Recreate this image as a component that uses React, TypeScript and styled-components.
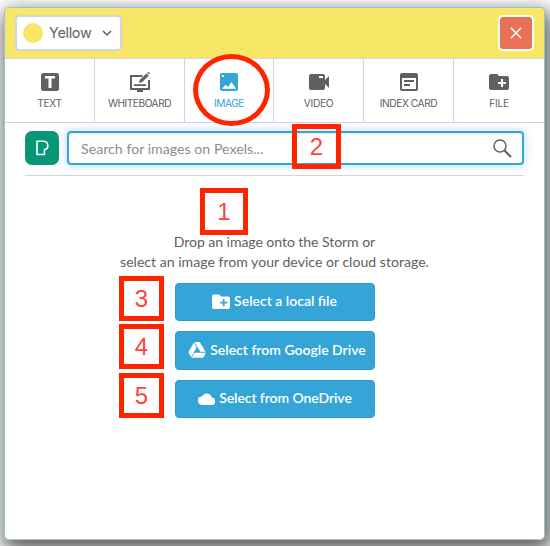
import React from 'react';
import styled, { createGlobalStyle } from 'styled-components';

const Global = createGlobalStyle`
  *, *::before, *::after { box-sizing: border-box; }
  body { margin: 0; background: #fff; overflow: hidden; font-family: Lato, "Open Sans", sans-serif; color: #5f6062; }
  svg { display: block; flex: none; }
`;

const Page = styled.main`
  width: 550px;
  height: 546px;
  padding: 7px 5px 6px 4px;
  overflow: hidden;
`;

const Dialog = styled.section`
  position: relative;
  height: 533px;
  background: #fff;
  border: 1px solid #8ec5d8;
  border-bottom-color: #b5c4ca;
  border-radius: 5px;
  box-shadow: 3px 8px 20px 4px rgba(0, 0, 0, 0.62);
`;

const Header = styled.header`
  display: flex;
  justify-content: space-between;
  align-items: flex-start;
  height: 51px;
  padding: 7px 10px;
  background: #f8e767;
  border-bottom: 1px solid #d3d8df;
  border-radius: 4px 4px 0 0;
`;

const ColorSelect = styled.button`
  display: flex;
  align-items: center;
  width: 107px;
  height: 36px;
  padding: 0 8px 0 6px;
  background: #fff;
  border: 2px solid #cfd6e2;
  border-radius: 4px;
  font: 14.5px Inter, sans-serif;
  color: #5f6062;
`;

const Swatch = styled.span`
  width: 20px;
  height: 20px;
  margin-right: 6px;
  border-radius: 50%;
  background: #f8e767;
`;

const Fitted = styled.span<{ $tracking?: number }>`
  letter-spacing: ${(p) => p.$tracking ?? 0}px;
  white-space: nowrap;
`;

const ColorName = styled(Fitted)`
  flex: 1;
  padding-bottom: 2px;
  text-align: left;
`;

const CloseButton = styled.button`
  display: grid;
  place-items: center;
  width: 36px;
  height: 36px;
  padding: 0;
  background: #e97158;
  border: 2px solid #fff;
  border-radius: 5px;
`;

const Tabs = styled.nav`
  display: grid;
  grid-template-columns: 90px 90px 89px 90px 90px 90px;
  height: 64px;
  border-bottom: 1px solid #d0d5dc;
`;

const Tab = styled.button<{ $active?: boolean }>`
  display: flex;
  flex-direction: column;
  align-items: center;
  justify-content: flex-start;
  padding: 11px 0 0;
  background: none;
  border: 0;
  border-right: 1px solid #cfd6e0;
  color: ${(p) => (p.$active ? '#35a5d7' : '#5f6062')};
  font: 10.2px/14px Inter, sans-serif;
  &:last-child { border-right: 0; }
  svg { margin-bottom: 2px; }
`;

const SearchRow = styled.div`
  display: flex;
  gap: 8px;
  height: 53px;
  margin: 0 20px;
  padding-top: 8px;
  border-bottom: 1px solid #d0d5dc;
`;

const Pexels = styled.div`
  display: grid;
  place-items: center;
  width: 34px;
  height: 34px;
  border-radius: 7px;
  background: #079777;
`;

const SearchBox = styled.div`
  display: flex;
  align-items: center;
  justify-content: space-between;
  width: 457px;
  height: 34px;
  padding: 0 10px 0 12px;
  border: 2px solid #35a5d7;
  border-radius: 4px;
  box-shadow: 0 0 10px rgba(53, 155, 225, 0.38), inset 0 1px 1px #e8e8e8;
  color: #8d8d8e;
  font-size: 14.2px;
`;

const Drop = styled.div`
  display: flex;
  flex-direction: column;
  align-items: center;
  padding-top: 56px;
`;

const Hint = styled.p`
  display: flex;
  flex-direction: column;
  align-items: center;
  margin: 0 0 11px;
  font-size: 14.1px;
  line-height: 20px;
`;

const Sources = styled.div`
  display: grid;
  grid-template-rows: 38px 39px 38px;
  gap: 10px;
  width: 200px;
`;

const SourceButton = styled.button<{ $indent?: number }>`
  display: flex;
  align-items: center;
  justify-content: center;
  gap: 4px;
  padding: 0 0 1px ${(p) => p.$indent ?? 0}px;
  border: 1px solid #2a98ca;
  border-radius: 4px;
  background: #35a5d7;
  color: #fff;
  font: 600 14px Lato, sans-serif;
  span { padding-bottom: 2px; }
`;

const Marker = styled.span<{ $x: number; $y: number; $w: number; $h: number }>`
  position: absolute;
  left: ${(p) => p.$x}px;
  top: ${(p) => p.$y}px;
  width: ${(p) => p.$w}px;
  height: ${(p) => p.$h}px;
  display: grid;
  place-items: center;
  border: 5px solid #ff2400;
  color: #ff4339;
  font: 24px "Liberation Sans", sans-serif;
`;

const Ring = styled.span`
  position: absolute;
  left: 188px;
  top: 46px;
  width: 77px;
  height: 72px;
  border: 5px solid #ff2400;
  border-radius: 50%;
`;

const TextIcon = () => (
  <svg width="18" height="24" viewBox="0 0 18 24">
    <rect y="3" width="18" height="18" rx="2.5" fill="currentColor" />
    <path d="M4 6h10v2.6h-3.5V18h-3V8.600H4z" fill="#fff" />
  </svg>
);
const BoardIcon = () => (
  <svg width="20" height="24" viewBox="0 0 20 24">
    <path d="M12.500 6H1v13h18V10" fill="none" stroke="currentColor" strokeWidth="2" />
    <path d="M7 19.5h6V22H7zM4 14.200h12V16H4zM9 13l.9-3.2 6.700-6.200 2.100 2.100-6.400 6.300zM17.200 3l1-.9c.4-.4 1.900 1.100 1.500 1.600l-.8.9z" fill="currentColor" />
  </svg>
);
const ImageIcon = () => (
  <svg width="18" height="24" viewBox="0 0 18 24">
    <rect y="3" width="18" height="18" rx="2" fill="currentColor" />
    <path d="M2 18.800 5.600 14.700 8 17.100l3.500-5.200 4.600 6.900zM2 5h2v2H2z" fill="#fff" />
  </svg>
);
const VideoIcon = () => (
  <svg width="20" height="24" viewBox="0 0 20 24">
    <path d="M2 4h12a2 2 0 0 1 2 2v4l4-4v12l-4-4v4a2 2 0 0 1-2 2H2a2 2 0 0 1-2-2V6a2 2 0 0 1 2-2z" fill="currentColor" />
    <path d="M10 6h4v2h-4z" fill="#fff" />
  </svg>
);
const CardIcon = () => (
  <svg width="18" height="24" viewBox="0 0 18 24">
    <rect y="3" width="18" height="18" rx="2" fill="currentColor" />
    <path d="M2 8h14v11H2z" fill="#fff" />
    <path d="M4 10h10v2H4zM4 14h6v2H4z" fill="currentColor" />
  </svg>
);
const FolderIcon = ({ width = 20, cross = '#fff' }: { width?: number; cross?: string }) => (
  <svg width={width} height={width * 1.2} viewBox="0 0 20 24">
    <path d="M2 4h6l2 2h8a2 2 0 0 1 2 2v10a2 2 0 0 1-2 2H2a2 2 0 0 1-2-2V6a2 2 0 0 1 2-2z" fill="currentColor" />
    <path d="M13 9v8M9 13h8" stroke={cross} strokeWidth="2" />
  </svg>
);
const DriveIcon = () => (
  <svg width="18" height="16" viewBox="0 0 18 16" fill="currentColor">
    <path d="M5.900.4 8.700 5.200 3.200 15.200.3 10.200zM6.600 0h5.200l5.700 9.800h-5.200zM6.400 10.800H18l-2.800 4.900H3.700z" />
  </svg>
);
const CloudIcon = () => (
  <svg width="17" height="12" viewBox="0 0 17 12">
    <path d="M13.700 4.500A5.200 5.200 0 0 0 4 3.200 4.300 4.300 0 0 0 4.300 12h9a3.700 3.700 0 0 0 .4-7.500z" fill="currentColor" />
  </svg>
);

const tabs = [
  { label: 'TEXT', icon: <TextIcon />, tracking: -0.3 },
  { label: 'WHITEBOARD', icon: <BoardIcon />, tracking: -0.5 },
  { label: 'IMAGE', icon: <ImageIcon />, tracking: -0.5, active: true },
  { label: 'VIDEO', icon: <VideoIcon />, tracking: -0.3 },
  { label: 'INDEX CARD', icon: <CardIcon />, tracking: -0.45 },
  { label: 'FILE', icon: <FolderIcon />, tracking: -0.3 },
];

const markers = [
  { n: 1, x: 195, y: 180, w: 48, h: 47 },
  { n: 2, x: 287, y: 116, w: 49, h: 45 },
  { n: 3, x: 114, y: 268, w: 45, h: 45 },
  { n: 4, x: 114, y: 316, w: 45, h: 45 },
  { n: 5, x: 114, y: 365, w: 45, h: 45 },
];

export default function App() {
  return (
    <Page>
      <Global />
      <Dialog>
        <Header>
          <ColorSelect>
            <Swatch />
            <ColorName $tracking={-0.35}>Yellow</ColorName>
            <svg width="10" height="8" viewBox="0 0 10 8"><path d="m1 2 4 4 4-4" fill="none" stroke="currentColor" strokeWidth="1.5" /></svg>
          </ColorSelect>
          <CloseButton aria-label="Close">
            <svg width="12" height="12" viewBox="0 0 12 12"><path d="m.8.8 10.400 10.400m0-10.400L.8 11.200" stroke="#fff" strokeWidth="1.5" /></svg>
          </CloseButton>
        </Header>
        <Tabs>
          {tabs.map((t) => (
            <Tab key={t.label} $active={t.active}>
              {t.icon}
              <Fitted $tracking={t.tracking}>{t.label}</Fitted>
            </Tab>
          ))}
        </Tabs>
        <SearchRow>
          <Pexels>
            <svg width="13" height="16" viewBox="0 0 13 16"><path d="M1 1.300h6.800a4.300 4.300 0 0 1 .6 8.500v4.700H1z" fill="none" stroke="#fff" strokeWidth="1.6" /><path d="M5 4.500h2.800a1.300 1.300 0 0 1 0 2.600H5z" fill="#079777" /></svg>
          </Pexels>
          <SearchBox>
            <Fitted>Search for images on Pexels...</Fitted>
            <svg width="19" height="19" viewBox="0 0 19 19" fill="none" stroke="#5f6062"><circle cx="7" cy="7" r="6" strokeWidth="1.4" /><path d="m11.500 11.500 6.500 6.500" strokeWidth="2.2" /></svg>
          </SearchBox>
        </SearchRow>
        <Drop>
          <Hint>
            <Fitted $tracking={-0.08}>Drop an image onto the Storm or</Fitted>
            <Fitted>select an image from your device or cloud storage.</Fitted>
          </Hint>
          <Sources>
            <SourceButton><FolderIcon width={18} cross="#35a5d7" /><Fitted>Select a local file</Fitted></SourceButton>
            <SourceButton $indent={5}><DriveIcon /><Fitted>Select from Google Drive</Fitted></SourceButton>
            <SourceButton $indent={1}><CloudIcon /><Fitted $tracking={-0.08}>Select from OneDrive</Fitted></SourceButton>
          </Sources>
        </Drop>
        <Ring />
        {markers.map((m) => (
          <Marker key={m.n} $x={m.x} $y={m.y} $w={m.w} $h={m.h}>{m.n}</Marker>
        ))}
      </Dialog>
    </Page>
  );
}
